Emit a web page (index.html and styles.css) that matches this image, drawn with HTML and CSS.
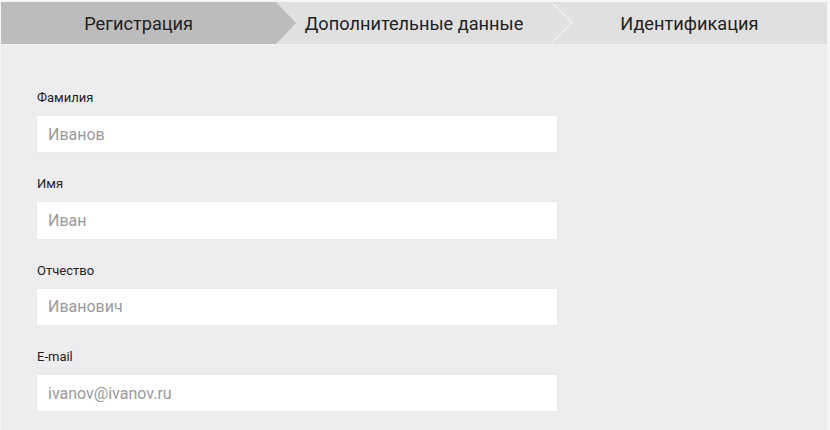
FILE: index.html
```html
<!DOCTYPE html>
<html lang="ru">
<head>
<meta charset="utf-8">
<title>Регистрация</title>
<link rel="stylesheet" href="styles.css">
</head>
<body>
<div class="page">
  <div class="tabs">
    <div class="tab tab-active">Регистрация</div>
    <div class="tab tab-mid">Дополнительные данные</div>
    <div class="tab">Идентификация</div>
  </div>
  <form class="form">
    <div class="field">
      <label class="label">Фамилия</label>
      <input class="input" type="text" placeholder="Иванов">
    </div>
    <div class="field">
      <label class="label">Имя</label>
      <input class="input" type="text" placeholder="Иван">
    </div>
    <div class="field">
      <label class="label">Отчество</label>
      <input class="input" type="text" placeholder="Иванович">
    </div>
    <div class="field">
      <label class="label">E-mail</label>
      <input class="input" type="text" placeholder="ivanov@ivanov.ru">
    </div>
  </form>
</div>
</body>
</html>
```
FILE: styles.css
```css
html, body {
  margin: 0;
  padding: 0;
  height: 100%;
}
body {
  background: #f6f6f7;
  font-family: Roboto, "Liberation Sans", Arial, sans-serif;
  overflow: hidden;
}
.page {
  margin: 2px 3px 0 1px;
  background: #ededef;
  height: calc(100% - 2px);
}
.tabs {
  display: flex;
  height: 42px;
  border-bottom: 1px solid #f1f1f2;
}
.tab {
  flex: 1;
  position: relative;
  display: flex;
  align-items: center;
  justify-content: center;
  background: #e0e0e0;
  color: #222;
  font-size: 18.2px;
}
.tab-active {
  background: #bcbcbc;
}
.tab-active::after {
  content: "";
  position: absolute;
  left: 100%;
  top: 0;
  border-left: 20px solid #bcbcbc;
  border-top: 21px solid transparent;
  border-bottom: 21px solid transparent;
  z-index: 2;
}
.tab-mid::before {
  content: "";
  position: absolute;
  left: 100%;
  top: 0;
  border-left: 21px solid #f4f4f4;
  border-top: 21px solid transparent;
  border-bottom: 21px solid transparent;
  z-index: 1;
}
.tab-mid::after {
  content: "";
  position: absolute;
  left: calc(100% - 2px);
  top: 0;
  border-left: 21px solid #e0e0e0;
  border-top: 21px solid transparent;
  border-bottom: 21px solid transparent;
  z-index: 2;
}
.form {
  padding: 45px 0 0 36px;
  display: flex;
  flex-direction: column;
  gap: 24px;
}
.field {
  display: flex;
  flex-direction: column;
  gap: 10px;
}
.label {
  font-size: 13px;
  line-height: 16px;
  color: #222;
}
.input {
  width: 520px;
  height: 36.3px;
  box-sizing: border-box;
  border: none;
  outline: none;
  background: #fff;
  padding: 0 11px;
  font-family: Roboto, "Liberation Sans", Arial, sans-serif;
  font-size: 16px;
  color: #444;
  box-shadow: 0 0 2px rgba(0, 0, 0, 0.04);
}
.input::placeholder {
  color: #9a9a9a;
  opacity: 1;
}
```
